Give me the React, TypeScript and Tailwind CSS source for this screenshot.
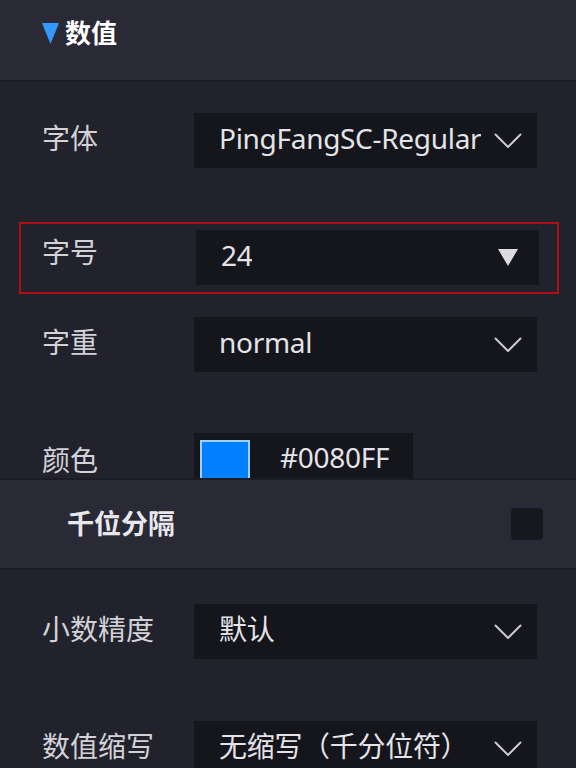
import React from 'react';

const font = { fontFamily: '"Noto Sans", "Noto Sans CJK SC", sans-serif' };

const Chevron = () => (
  <svg width="28" height="16" viewBox="0 0 28 16" fill="none" className="shrink-0">
    <path d="M1.5 1.5 L14 14 L26.5 1.5" stroke="#c9c9cf" strokeWidth="2" strokeLinecap="round" strokeLinejoin="round" />
  </svg>
);

const Caret = () => (
  <svg width="20" height="17" viewBox="0 0 20 17" className="shrink-0">
    <path d="M0 0 H20 L10 17 Z" fill="#dcdce0" />
  </svg>
);

const Select = ({ value, icon = 'chevron' }: { value: string; icon?: 'chevron' | 'caret' }) => (
  <div className="flex h-[55px] w-[343px] items-center justify-between gap-[4px] bg-[#15151c] pl-[25px] pr-[15px]">
    <span className="-mt-[5px] truncate text-[28px] leading-[38px] tracking-[-0.3px] text-[#e4e4e8]">{value}</span>
    {icon === 'chevron' ? <Chevron /> : <span className="pr-[6px]"><Caret /></span>}
  </div>
);

const Label = ({ children }: { children: React.ReactNode }) => (
  <div className="w-[152px] shrink-0 text-[28px] leading-[34px] text-[#d2d2d8]">{children}</div>
);

export default function App() {
  return (
    <div className="h-[768px] w-[576px] overflow-hidden bg-[#22222c]" style={font}>
      {/* section header */}
      <div className="flex h-[82px] items-center gap-[6px] border-b-2 border-[#1a1a22] bg-[#2a2a36] pb-[14px] pl-[42px]">
        <svg width="17" height="21" viewBox="0 0 17 21">
          <path d="M0 0 H17 L8.5 21 Z" fill="#3399ff" />
        </svg>
        <span className="text-[26px] font-bold text-white">数值</span>
      </div>

      <div className="pt-[31px]">
        <div className="flex items-center pl-[42px]">
          <Label><div className="-mt-[6px]">字体</div></Label>
          <Select value="PingFangSC-Regular" />
        </div>

        <div className="ml-[19px] mt-[54px] flex h-[72px] w-[540px] items-start border-2 border-[#b01014] pl-[21px] pt-[6px]">
          <Label><div className="pt-[5px]">字号</div></Label>
          <div className="ml-[2px]"><Select value="24" icon="caret" /></div>
        </div>

        <div className="mt-[23px] flex items-center pl-[42px]">
          <Label><div className="-mt-[6px]">字重</div></Label>
          <Select value="normal" />
        </div>

        <div className="mt-[61px] flex h-[45px] items-start overflow-hidden pl-[42px]">
          <Label><div className="pt-[10px]">颜色</div></Label>
          <div className="flex h-[55px] w-[219px] items-start bg-[#15151c] pl-[6px] pt-[7px]">
            <div className="h-[42px] w-[50px] border-2 border-[#9fd0ff] bg-[#0080ff]" />
            <span className="ml-[30px] text-[28px] leading-[34px] tracking-[-0.3px] text-[#e4e4e8]">#0080FF</span>
          </div>
        </div>

        {/* thousands separator */}
        <div className="flex h-[92px] items-center justify-between border-y-2 border-[#1b1b23] bg-[#2a2a36] pl-[67px] pr-[33px]">
          <span className="text-[27px] font-bold text-[#e8e8ec]">千位分隔</span>
          <div className="h-[32px] w-[32px] rounded-[4px] bg-[#17171e]" />
        </div>

        <div className="mt-[34px] flex items-center pl-[42px]">
          <Label><div className="-mt-[6px]">小数精度</div></Label>
          <Select value="默认" />
        </div>

        <div className="mt-[62px] flex items-center pl-[42px]">
          <Label><div className="-mt-[6px]">数值缩写</div></Label>
          <Select value="无缩写（千分位符）" />
        </div>
      </div>
    </div>
  );
}
